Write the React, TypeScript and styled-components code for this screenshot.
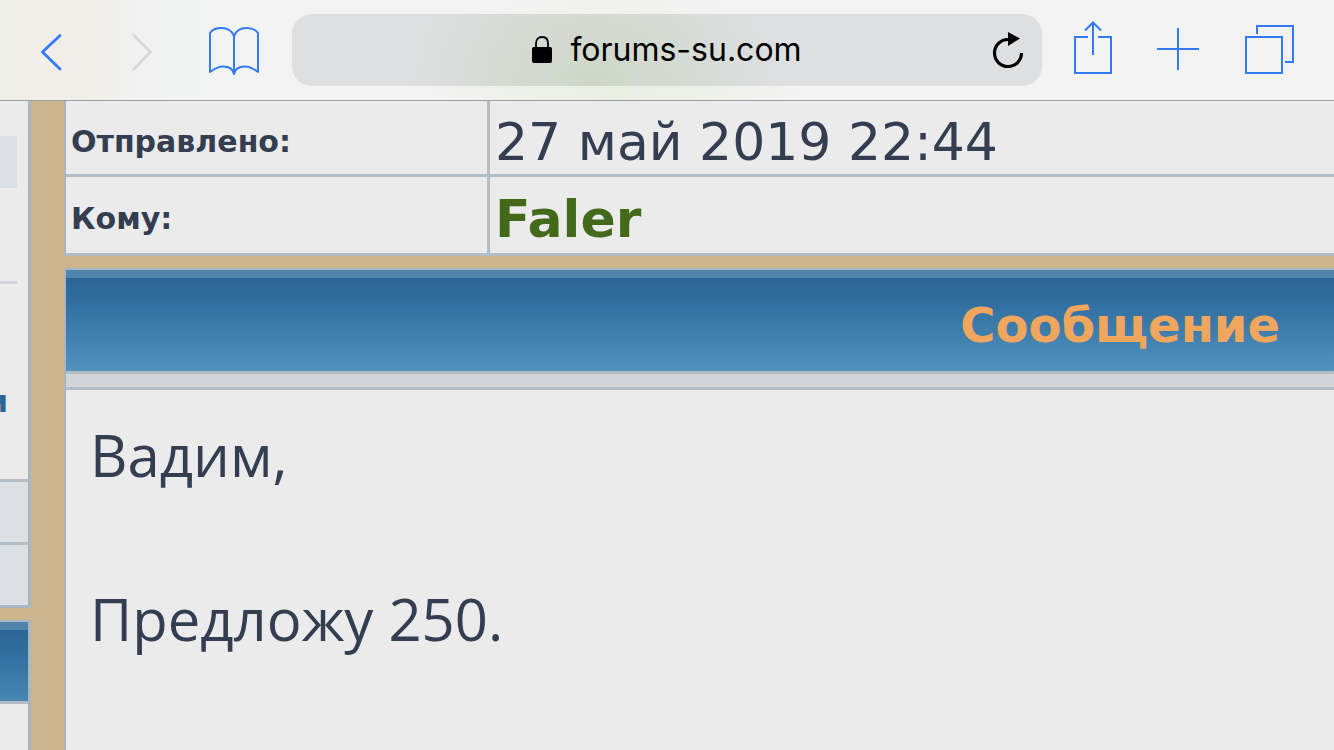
import React from "react";
import styled, { createGlobalStyle } from "styled-components";

const color = {
  line: "#a9b6c0",
  softLine: "#b2bdc6",
  panel: "#ebebeb",
  ink: "#343e50",
  blue: "#327af6",
};

const verdana = `Verdana, "DejaVu Sans", sans-serif`;

const GlobalStyle = createGlobalStyle`
  *, *::before, *::after { box-sizing: border-box; }
  body { margin: 0; background: #ccb48f; color: ${color.ink}; font-family: ${verdana}; }
`;

const Page = styled.div`
  display: flex;
  flex-direction: column;
  height: 100vh;
  overflow: hidden;
`;

const Toolbar = styled.header`
  display: flex;
  align-items: center;
  padding: 14px 38px 14px 26px;
  border-bottom: 1px solid #a0a1a2;
  background:
    radial-gradient(ellipse 190px 120px at 46% 100%, rgba(226, 234, 215, 0.6), rgba(226, 234, 215, 0)),
    linear-gradient(90deg, #eeeeea 0, #f2eee8 40px, #f0eeea 90px, #f1f3f3 160px, #f3f3f3 260px);
`;

const ButtonGroup = styled.nav<{ $gap: number }>`
  display: flex;
  gap: ${(p) => p.$gap}px;
`;

const IconButton = styled.button`
  display: block;
  padding: 0;
  border: 0;
  background: none;
  color: ${color.blue};

  &:disabled { color: #d8d8d8; }

  svg { display: block; overflow: visible; fill: none; stroke: currentColor; stroke-width: 2; }
`;

const AddressBar = styled.form`
  flex: 1;
  min-width: 0;
  display: grid;
  grid-template-columns: 1fr auto 1fr;
  align-items: center;
  height: 72px;
  margin: 0 26px 0 34px;
  padding: 0 18px;
  border-radius: 20px;
  background:
    radial-gradient(ellipse 190px 150px at 40% 90%, rgba(200, 211, 190, 0.7), rgba(200, 211, 190, 0)),
    #dedfe1;
`;

const Address = styled.label`
  grid-column: 2;
  display: flex;
  align-items: center;
  gap: 18px;
`;

const AddressInput = styled.input`
  field-sizing: content;
  padding: 0;
  border: 0;
  outline: 0;
  background: none;
  color: #000;
  font: 400 32px/40px Inter, sans-serif;
`;

const Reload = styled(IconButton)`
  justify-self: end;
  color: #000;
`;

const Content = styled.div`
  flex: 1;
  min-height: 0;
  display: flex;
  gap: 33px;
`;

const Sidebar = styled.aside`
  flex: none;
  width: 31px;
  display: flex;
  flex-direction: column;
  gap: 12px;
`;

const SidePanel = styled.section<{ $grow?: boolean }>`
  flex: ${(p) => (p.$grow ? "1" : "none")};
  border: solid ${color.line};
  border-width: ${(p) => (p.$grow ? "2px 3px 0 0" : "0 3px 3px 0")};
  background: ${color.panel};
`;

const SideBlock = styled.div`
  height: 52px;
  margin: 35px 11px 0 0;
  background: #dce0e5;
`;

const SideRule = styled.hr`
  height: 3px;
  margin: 93px 11px 0 0;
  border: 0;
  background: #d1d5d9;
`;

const SideLink = styled.a`
  display: flex;
  justify-content: flex-end;
  height: 36px;
  margin: 100px 0 59px;
  padding-right: 20px;
  overflow: hidden;
  color: #2b6595;
  font-weight: 700;
  font-size: 30px;
  line-height: 36px;
  text-decoration: none;
`;

const SideCell = styled.div`
  height: 63px;
  border-top: 3px solid ${color.softLine};
  background: #dce0e5;
`;

const Band = styled.div<{ $height: number }>`
  display: flex;
  align-items: center;
  justify-content: flex-end;
  height: ${(p) => p.$height}px;
  border-top: 8px solid #4f85aa;
  border-bottom: 3px solid ${color.softLine};
  background: linear-gradient(#2b6595, #3170a0 30%, #5292bf) 0 0 / 100% 93px no-repeat;
`;

const Main = styled.main`
  flex: 1;
  min-width: 0;
  display: flex;
  flex-direction: column;
  gap: 12px;
`;

const Details = styled.table`
  width: 100%;
  border-spacing: 0;
  border-left: 2px solid ${color.line};
  background: ${color.panel};
  text-align: left;
`;

const Row = styled.tr<{ $height: number }>`
  height: ${(p) => p.$height}px;
`;

const Label = styled.th`
  width: 424px;
  padding: 8px 0 0 5px;
  border: solid ${color.softLine};
  border-width: 0 3px 3px 0;
  font-size: 30px;
  line-height: 36px;
`;

const Value = styled.td`
  padding: 8px 0 0 5px;
  border-bottom: 3px solid ${color.softLine};
  font-size: 52px;
  line-height: 60px;
  white-space: nowrap;
`;

const UserLink = styled.a`
  color: #426a1a;
  font-weight: 700;
  text-decoration: none;
`;

const Message = styled.article`
  flex: 1;
  border: solid ${color.line};
  border-width: 2px 0 0 2px;
  background: ${color.panel};
`;

const Title = styled.h1`
  margin: 0 54px 0 0;
  color: #f1a65d;
  font-size: 48px;
  line-height: 60px;
`;

const Spacer = styled.div`
  height: 16px;
  border-bottom: 3px solid ${color.softLine};
  background: #d1d5da;
`;

const Body = styled.div`
  padding: 24px;
  font-family: "Trebuchet MS", "Open Sans", sans-serif;
  font-weight: 500;
  font-size: 58px;
  line-height: 82px;

  p { margin: 0 0 82px; }
`;

export default function App() {
  return (
    <Page>
      <GlobalStyle />
      <Toolbar>
        <ButtonGroup $gap={38} aria-label="История">
          <IconButton type="button" aria-label="Назад">
            <svg width="52" height="52" viewBox="0 0 52 52">
              <path d="M34 11.5 16.5 28 34 45" strokeWidth="2.8" strokeLinecap="round" strokeLinejoin="round" />
            </svg>
          </IconButton>
          <IconButton type="button" aria-label="Вперёд" disabled>
            <svg width="52" height="52" viewBox="0 0 52 52">
              <path d="M18 11.5 34.5 28 18 45" strokeWidth="2.8" strokeLinecap="round" strokeLinejoin="round" />
            </svg>
          </IconButton>
          <IconButton type="button" aria-label="Закладки">
            <svg width="52" height="52" viewBox="0 0 52 52">
              <path
                d="M28 50V12C26 7 21 4 15.5 4C10.500 4 6 6 4 9V48C8 45 12 42.500 17 42.500C22.500 42.500 27 45 28 50C29 45 33.500 42.500 39 42.500C44 42.500 48 45 52 48V9C50 6 45.500 4 40.500 4C35 4 30 7 28 12"
                strokeLinejoin="round"
              />
            </svg>
          </IconButton>
        </ButtonGroup>

        <AddressBar onSubmit={(e) => e.preventDefault()}>
          <Address>
            <svg width="20" height="28" viewBox="0 0 20 28" aria-hidden="true">
              <path d="M4 13V7.500C4 3 6.500 1 10 1S16 3 16 7.500V13" fill="none" stroke="#000" strokeWidth="1.8" />
              <rect y="11" width="20" height="16" rx="2" />
            </svg>
            <AddressInput aria-label="Адрес" defaultValue="forums-su.com" />
          </Address>
          <Reload type="button" aria-label="Обновить">
            <svg width="32" height="40" viewBox="0 0 32 40">
              <path d="M16 9.500A13.500 13.500 0 1 0 29.500 23" strokeWidth="3.2" />
              <path d="M16 2 28 8.500 16 16Z" fill="currentColor" stroke="none" />
            </svg>
          </Reload>
        </AddressBar>

        <ButtonGroup $gap={36} aria-label="Действия">
          <IconButton type="button" aria-label="Поделиться">
            <svg width="52" height="52" viewBox="0 0 52 52">
              <path d="M20 13H7V49H43V13H30M25 31V-1M17 6.500 25-1.500 33 6.500" />
            </svg>
          </IconButton>
          <IconButton type="button" aria-label="Новая вкладка">
            <svg width="52" height="52" viewBox="0 0 52 52">
              <path d="M1 25H43M22 4V46" />
            </svg>
          </IconButton>
          <IconButton type="button" aria-label="Вкладки">
            <svg width="52" height="52" viewBox="0 0 52 52">
              <path d="M2 13H38V49H2ZM13 10V2H49V38H41" />
            </svg>
          </IconButton>
        </ButtonGroup>
      </Toolbar>

      <Content>
        <Sidebar>
          <SidePanel>
            <SideBlock />
            <SideRule />
            <SideLink href="#">и</SideLink>
            <SideCell />
            <SideCell />
          </SidePanel>
          <SidePanel $grow>
            <Band $height={82} />
          </SidePanel>
        </Sidebar>

        <Main>
          <Details>
            <tbody>
              <Row $height={76}>
                <Label scope="row">Отправлено:</Label>
                <Value>27 май 2019 22:44</Value>
              </Row>
              <Row $height={79}>
                <Label scope="row">Кому:</Label>
                <Value>
                  <UserLink href="#">Faler</UserLink>
                </Value>
              </Row>
            </tbody>
          </Details>
          <Message>
            <Band $height={104}>
              <Title>Сообщение</Title>
            </Band>
            <Spacer />
            <Body>
              <p>Вадим,</p>
              <p>Предложу 250.</p>
            </Body>
          </Message>
        </Main>
      </Content>
    </Page>
  );
}
